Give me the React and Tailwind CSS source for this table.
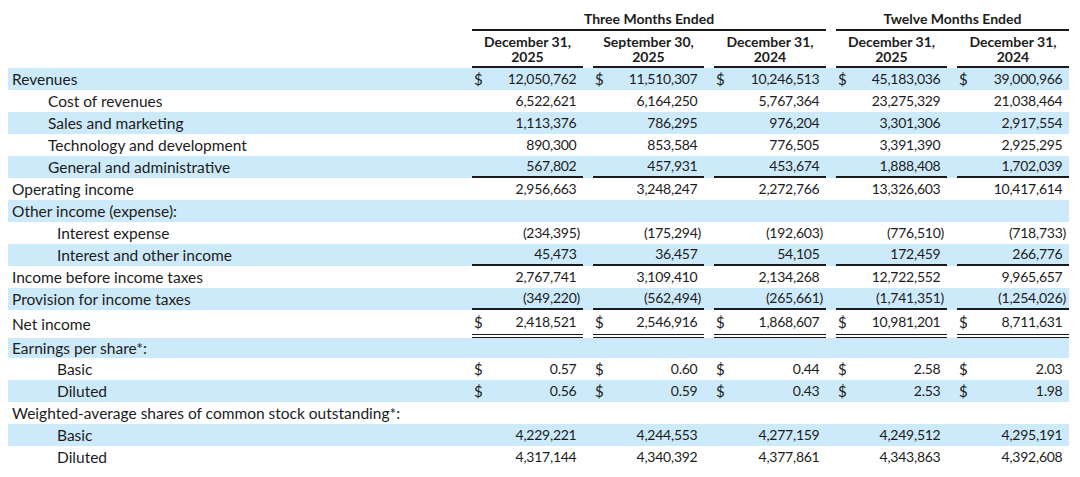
import React from 'react';

const GRID = 'grid grid-cols-[454px_111px_111px_112px_111px_112px] gap-x-[10px] w-[1061px]';

const rows = [
  { label: 'Revenues', dollar: true, shade: true, values: ['12,050,762', '11,510,307', '10,246,513', '45,183,036', '39,000,966'] },
  { label: 'Cost of revenues', indent: 1, values: ['6,522,621', '6,164,250', '5,767,364', '23,275,329', '21,038,464'] },
  { label: 'Sales and marketing', indent: 1, shade: true, values: ['1,113,376', '786,295', '976,204', '3,301,306', '2,917,554'] },
  { label: 'Technology and development', indent: 1, values: ['890,300', '853,584', '776,505', '3,391,390', '2,925,295'] },
  { label: 'General and administrative', indent: 1, shade: true, line: 'single', values: ['567,802', '457,931', '453,674', '1,888,408', '1,702,039'] },
  { label: 'Operating income', values: ['2,956,663', '3,248,247', '2,272,766', '13,326,603', '10,417,614'] },
  { label: 'Other income (expense):', shade: true },
  { label: 'Interest expense', indent: 2, values: ['(234,395)', '(175,294)', '(192,603)', '(776,510)', '(718,733)'] },
  { label: 'Interest and other income', indent: 2, shade: true, line: 'single', values: ['45,473', '36,457', '54,105', '172,459', '266,776'] },
  { label: 'Income before income taxes', values: ['2,767,741', '3,109,410', '2,134,268', '12,722,552', '9,965,657'] },
  { label: 'Provision for income taxes', shade: true, line: 'single', values: ['(349,220)', '(562,494)', '(265,661)', '(1,741,351)', '(1,254,026)'] },
  { label: 'Net income', dollar: true, line: 'double', values: ['2,418,521', '2,546,916', '1,868,607', '10,981,201', '8,711,631'] },
  { label: 'Earnings per share*:', shade: true, short: true },
  { label: 'Basic', indent: 2, dollar: true, values: ['0.57', '0.60', '0.44', '2.58', '2.03'] },
  { label: 'Diluted', indent: 2, dollar: true, shade: true, values: ['0.56', '0.59', '0.43', '2.53', '1.98'] },
  { label: 'Weighted-average shares of common stock outstanding*:' },
  { label: 'Basic', indent: 2, shade: true, values: ['4,229,221', '4,244,553', '4,277,159', '4,249,512', '4,295,191'] },
  { label: 'Diluted', indent: 2, values: ['4,317,144', '4,340,392', '4,377,861', '4,343,863', '4,392,608'] },
];

const headers = [
  ['December 31,', '2025'],
  ['September 30,', '2025'],
  ['December 31,', '2024'],
  ['December 31,', '2025'],
  ['December 31,', '2024'],
];

const Cell = ({ value, dollar, line }) => {
  const negative = value && value.endsWith(')');
  return (
    <div className="flex flex-col h-full min-h-0">
      <div className="flex-1 min-h-0 flex items-center justify-between pl-[2px] pr-[3px]">
        <span className="text-[15px]">{dollar ? '$' : ''}</span>
        <span className="text-[14px] tracking-[-0.25px]">
          {value}
          {value && !negative && <span className="invisible">)</span>}
        </span>
      </div>
      {line === 'single' && <div className="h-[2px] shrink-0 bg-[#1a1a1a]" />}
      {line === 'double' && (
        <div className="flex flex-col shrink-0 gap-[2px]">
          <div className="h-[1px] bg-[#1a1a1a]" />
          <div className="h-[1px] bg-[#1a1a1a]" />
        </div>
      )}
    </div>
  );
};

const Row = ({ row }) => {
  const pad = row.indent === 2 ? 'pl-[49px]' : row.indent === 1 ? 'pl-[40px]' : 'pl-[4px]';
  const height = row.line === 'double' ? 'h-[28px]' : row.short ? 'h-[20px]' : 'h-[22px]';
  return (
    <div
      className={`${GRID} grid-rows-[100%] leading-[18px] overflow-hidden ${height} ${
        row.shade ? 'bg-[#cdeafa]' : 'bg-white'
      }`}
    >
      <div className={`flex items-center whitespace-nowrap text-[15.5px] ${pad}`}>{row.label}</div>
      {[0, 1, 2, 3, 4].map((i) => (
        <Cell key={i} value={row.values ? row.values[i] : ''} dollar={row.dollar && row.values} line={row.line} />
      ))}
    </div>
  );
};

export default function App() {
  return (
    <div className="w-[1080px] h-[477px] bg-white pl-[8px] text-[#1c1c1c] font-['Lato',sans-serif] overflow-hidden">
      {/* period headers */}
      <div className={`${GRID} h-[31px] font-bold text-[14px] leading-[18px]`}>
        <div />
        <div className="col-span-3 flex items-end justify-center pb-[1px] border-solid border-b-[2px] border-b-[#1a1a1a]">
          Three Months Ended
        </div>
        <div className="col-span-2 flex items-end justify-center pb-[1px] border-solid border-b-[2px] border-b-[#1a1a1a]">
          Twelve Months Ended
        </div>
      </div>

      {/* date headers */}
      <div className={`${GRID} h-[37px] font-bold text-[14px] leading-[15px]`}>
        <div />
        {headers.map(([a, b], i) => (
          <div
            key={i}
            className="flex flex-col items-center justify-end pb-[2px] border-solid border-b-[2px] border-b-[#1a1a1a]"
          >
            <span>{a}</span>
            <span>{b}</span>
          </div>
        ))}
      </div>

      {rows.map((row, i) => (
        <Row key={i} row={row} />
      ))}
    </div>
  );
}
